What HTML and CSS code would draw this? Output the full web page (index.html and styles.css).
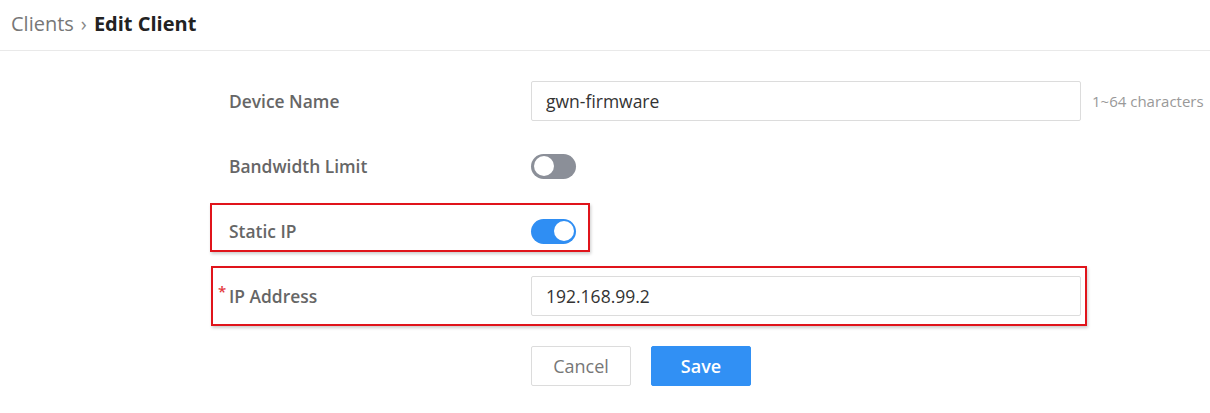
FILE: index.html
```html
<!DOCTYPE html>
<html>
<head>
<meta charset="utf-8">
<link rel="stylesheet" href="styles.css">
</head>
<body>
<header class="topbar">
  <span class="crumb">Clients</span>
  <span class="sep">&#8250;</span>
  <span class="crumb-current">Edit Client</span>
</header>
<main class="form">
  <div class="row">
    <label class="label">Device Name</label>
    <div class="field">
      <input class="input" type="text" value="gwn-firmware">
      <span class="hint">1~64 characters</span>
    </div>
  </div>
  <div class="row">
    <label class="label">Bandwidth Limit</label>
    <div class="field">
      <span class="toggle"><span class="knob"></span></span>
    </div>
  </div>
  <div class="row">
    <label class="label">Static IP</label>
    <div class="field">
      <span class="toggle on"><span class="knob"></span></span>
    </div>
  </div>
  <div class="row">
    <label class="label"><span class="req">*</span>IP Address</label>
    <div class="field">
      <input class="input" type="text" value="192.168.99.2">
    </div>
  </div>
  <div class="actions">
    <button class="btn">Cancel</button>
    <button class="btn primary">Save</button>
  </div>
  <div class="mark mark-static"></div>
  <div class="mark mark-ip"></div>
</main>
</body>
</html>
```
FILE: styles.css
```css
* { box-sizing: border-box; }
html, body { margin: 0; padding: 0; background: #fff; }
body {
  font-family: "Open Sans", "Liberation Sans", sans-serif;
  color: #333;
}
.topbar {
  height: 51px;
  border-bottom: 1px solid #e9e9e9;
  display: flex;
  align-items: center;
  padding: 0 0 4px 11px;
  font-size: 20px;
}
.crumb { color: #777; }
.sep { color: #888; margin: 0 7px 0 7px; font-size: 20px; }
.crumb-current { color: #222; font-weight: 700; }

.form {
  position: relative;
  padding: 30px 0 0 229px;
  display: flex;
  flex-direction: column;
  gap: 25px;
}
.row {
  display: flex;
  align-items: center;
  height: 40px;
}
.label {
  width: 302px;
  font-size: 17.4px;
  font-weight: 600;
  color: #666;
  position: relative;
}
.req {
  position: absolute;
  left: -11px;
  top: -3px;
  color: #e4393c;
  font-size: 15px;
  font-weight: 600;
}
.field { display: flex; align-items: center; }
.input {
  width: 550px;
  height: 40px;
  border: 1px solid #dcdcdc;
  border-radius: 2px;
  padding: 0 14px;
  font-family: "Open Sans", sans-serif;
  font-size: 17.5px;
  color: #333;
  outline: none;
}
.hint {
  margin-left: 11px;
  font-size: 15px;
  color: #999;
}
.toggle {
  width: 45px;
  height: 25px;
  border-radius: 13px;
  background: #8b8f98;
  position: relative;
  display: inline-block;
}
.toggle .knob {
  position: absolute;
  top: 2.5px;
  left: 2.5px;
  width: 20px;
  height: 20px;
  border-radius: 50%;
  background: #fff;
}
.toggle.on { background: #2f8ef3; }
.toggle.on .knob { left: 22.5px; }

.actions {
  display: flex;
  gap: 20px;
  margin-left: 302px;
  margin-top: 5px;
}
.btn {
  width: 100px;
  height: 40px;
  border: 1px solid #dcdcdc;
  border-radius: 2px;
  background: #fff;
  font-family: "Open Sans", sans-serif;
  font-size: 18px;
  color: #777;
}
.btn.primary {
  background: #3190f4;
  border-color: #3190f4;
  color: #fff;
  font-weight: 600;
}
.mark {
  position: absolute;
  border: 2px solid #e0141b;
  box-shadow: 1px 2px 3px rgba(0,0,0,0.2);
}
.mark-static { left: 210px; top: 152px; width: 380px; height: 49px; }
.mark-ip { left: 211px; top: 215px; width: 876px; height: 60px; }
```
